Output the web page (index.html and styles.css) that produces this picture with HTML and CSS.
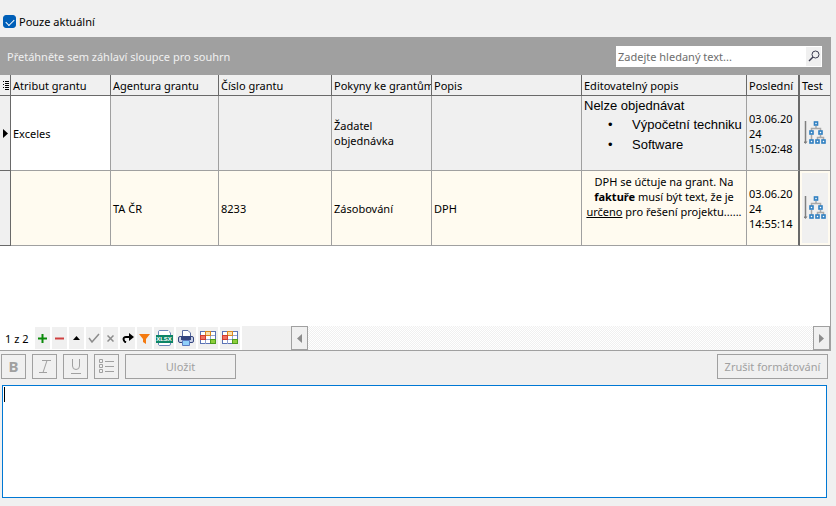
FILE: index.html
```
<!DOCTYPE html>
<html lang="cs">
<head>
  <meta charset="UTF-8">
  <meta name="viewport" content="width=device-width, initial-scale=1.0">
  <title>Granty</title>
  <link rel="stylesheet" href="styles.css">
</head>
<body>
  <svg class="symbols" aria-hidden="true">
    <symbol id="tree" viewBox="0 0 22 24">
      <path d="M1.500 0V22" stroke="#808080" stroke-width="1.500" fill="none"/>
      <path d="M-.5 20.500H3.500L1.500 23Z" fill="#808080"/>
      <path d="M12 5V8M7.500 10V7.500H16.500V10M7.500 14V19M13.500 19V16.500H19.500V19M16.500 14V17" stroke="#a9a9a9" stroke-width="1.500" fill="none"/>
      <g fill="#fff" stroke="#2f7fc1" stroke-width="1.600">
        <rect x="10.500" y="1" width="3" height="3"/>
        <rect x="6" y="10" width="3" height="3"/>
        <rect x="15" y="10" width="3" height="3"/>
        <rect x="6" y="19" width="3" height="3"/>
        <rect x="12" y="19" width="3" height="3"/>
        <rect x="18" y="19" width="3" height="3"/>
      </g>
    </symbol>
    <symbol id="sheet" viewBox="0 0 18 16">
      <rect x="1.500" y="1.500" width="15" height="12" fill="#fff" stroke="#5b73b5"/>
      <path d="M1 5.500H16M1 9.500H16M6.500 2V14M11.500 2V14" stroke="#93a3cf" fill="none"/>
      <rect x="6.500" y="1.500" width="5" height="4" fill="#fbdfae" stroke="#d98a1e"/>
      <rect x="1.500" y="5.500" width="5" height="4" fill="#f07060" stroke="#d03c30"/>
      <rect x="11.500" y="9.500" width="5" height="4" fill="#8ed03c" stroke="#4f9d1c"/>
    </symbol>
  </svg>

  <div class="filter">
    <input type="checkbox" id="current" checked>
    <label for="current">Pouze aktuální</label>
  </div>

  <div class="grid">
    <div class="group-bar">
      <span>Přetáhněte sem záhlaví sloupce pro souhrn</span>
      <div class="search">
        <input type="text" placeholder="Zadejte hledaný text..." aria-label="Hledat">
        <button aria-label="Hledat">
          <svg width="12" height="12" viewBox="0 0 12 12"><circle cx="7.500" cy="4.500" r="3.500" fill="none" stroke="#3c3c50"/><path d="M5 7L1 11" stroke="#3c3c50" stroke-width="1.500"/></svg>
        </button>
      </div>
    </div>

    <div class="rows">
      <table>
        <colgroup>
          <col class="c-mark"><col class="c-attr"><col class="c-agency"><col class="c-number">
          <col class="c-notes"><col class="c-desc"><col><col class="c-last"><col class="c-test">
        </colgroup>
        <thead>
          <tr>
            <th class="mark"><svg width="7" height="9" viewBox="0 0 7 9"><path d="M0 .5H1M0 3.500H1M0 6.500H1M2 .5H6M2 2.500H6M2 4.500H6M2 6.500H6M2 8.500H6" stroke="#000" fill="none"/></svg></th>
            <th>Atribut grantu</th>
            <th>Agentura grantu</th>
            <th>Číslo grantu</th>
            <th>Pokyny ke grantům</th>
            <th>Popis</th>
            <th>Editovatelný popis</th>
            <th class="fixed">Poslední</th>
            <th>Test</th>
          </tr>
        </thead>
        <tbody>
          <tr class="current">
            <td class="mark"><svg width="5" height="9" viewBox="0 0 5 9"><path d="M0 0L5 4.500L0 9Z"/></svg></td>
            <td class="focused">Exceles</td>
            <td></td>
            <td></td>
            <td>Žadatel objednávka</td>
            <td></td>
            <td class="rich">
              Nelze objednávat
              <ul>
                <li>Výpočetní techniku</li>
                <li>Software</li>
              </ul>
            </td>
            <td class="fixed date">03.06.2024<br>15:02:48</td>
            <td class="test"><button aria-label="Struktura"><svg width="22" height="24"><use href="#tree"/></svg></button></td>
          </tr>
          <tr>
            <td class="mark"></td>
            <td></td>
            <td>TA ČR</td>
            <td>8233</td>
            <td>Zásobování</td>
            <td>DPH</td>
            <td class="centered">DPH se účtuje na grant. Na <b>faktuře</b> musí být text, že je <u>určeno</u> pro řešení projektu......</td>
            <td class="fixed date">03.06.2024<br>14:55:14</td>
            <td class="test"><button aria-label="Struktura"><svg width="22" height="24"><use href="#tree"/></svg></button></td>
          </tr>
        </tbody>
      </table>
    </div>

    <div class="navigator">
      <span class="position">1 z 2</span>
      <button aria-label="Přidat"><svg width="9" height="9" viewBox="0 0 9 9"><path d="M4.500 0V9M0 4.500H9" stroke="#0a8a0a" stroke-width="2"/></svg></button>
      <button aria-label="Smazat"><svg width="9" height="9" viewBox="0 0 9 9"><path d="M0 4.500H9" stroke="#d04040" stroke-width="2"/></svg></button>
      <button aria-label="Upravit"><svg width="7" height="4" viewBox="0 0 7 4"><path d="M0 4L3.500 0L7 4Z"/></svg></button>
      <button aria-label="Potvrdit"><svg width="12" height="10" viewBox="0 0 12 10"><path d="M1 5L4 9L11 1" stroke="#8c8c8c" stroke-width="1.500" fill="none"/></svg></button>
      <button aria-label="Zrušit"><svg width="7" height="7" viewBox="0 0 7 7"><path d="M.5 .5L6.500 6.500M6.500 .5L.5 6.500" stroke="#8c8c8c" stroke-width="1.500"/></svg></button>
      <button aria-label="Obnovit"><svg width="12" height="10" viewBox="0 0 12 10"><path d="M4 9.500C1 8 .5 4 4 4H8" stroke="#000" stroke-width="2" fill="none"/><path d="M7 0L12 4L7 8Z"/></svg></button>
      <button aria-label="Filtr"><svg width="11" height="11" viewBox="0 0 11 11"><path d="M0 1H11L7 6V11L4 9V6Z" fill="#f47a10"/></svg></button>
      <button class="wide" aria-label="Export XLSX"><svg width="17" height="16" viewBox="0 0 17 16"><path d="M2.500 5V2Q2.500 .5 4 .5H12L14.500 3V5M2.500 13V14Q2.500 15.500 4 15.500H13Q14.500 15.500 14.500 14V13" fill="#fff" stroke="#6a86b8"/><path d="M3 1H13V15H3Z" fill="#fff"/><rect x="0" y="5" width="17" height="8" fill="#0c8566"/><text class="xlsx" x="8" y="11">XLSX</text></svg></button>
      <button class="wide" aria-label="Tisk"><svg width="16" height="16" viewBox="0 0 16 16"><path d="M4.500 6V.5H10L12.500 3V6" fill="#fff" stroke="#5a6ca0"/><rect x=".5" y="6.500" width="15" height="6" rx="1.500" fill="#c8d0e6" stroke="#34457e"/><path d="M3 7H13V10H3Z" fill="#34457e"/><path d="M4.500 10.500H11.500V15.500H4.500Z" fill="#8fd0fa" stroke="#5a7ac0"/></svg></button>
      <button class="wide" aria-label="Uložit vzhled"><svg width="18" height="16"><use href="#sheet"/></svg></button>
      <button class="wide" aria-label="Načíst vzhled"><svg width="18" height="16"><use href="#sheet"/></svg></button>
      <div class="scrollbar">
        <span class="filler"></span>
        <button aria-label="Posunout vlevo"><svg width="5" height="9" viewBox="0 0 5 9"><path d="M5 0L0 4.500L5 9Z" fill="#8c8c8c"/></svg></button>
        <span class="track"></span>
        <button aria-label="Posunout vpravo"><svg width="5" height="9" viewBox="0 0 5 9"><path d="M0 0L5 4.500L0 9Z" fill="#8c8c8c"/></svg></button>
      </div>
    </div>
  </div>

  <div class="toolbar">
    <button class="tool" disabled aria-label="Tučné"><b>B</b></button>
    <button class="tool" disabled aria-label="Kurzíva"><svg width="14" height="15" viewBox="0 0 14 15"><path d="M4 1.500H13M1 13.500H9M9 1.500L5 13.500" stroke="#a0a0a0" fill="none"/></svg></button>
    <button class="tool" disabled aria-label="Podtržené"><svg width="12" height="15" viewBox="0 0 12 15"><path d="M2.500 0V7Q2.500 10.500 6 10.500T9.500 7V0M1 14.500H11" stroke="#a0a0a0" fill="none"/></svg></button>
    <button class="tool" disabled aria-label="Odrážky"><svg width="15" height="15" viewBox="0 0 15 15"><path d="M.5 .5H3.500V3.500H.5ZM.5 5.500H3.500V8.500H.5ZM.5 10.500H3.500V13.500H.5ZM6 2.500H15M6 7.500H15M6 12.500H15" stroke="#a0a0a0" fill="none"/></svg></button>
    <button class="save" disabled>Uložit</button>
    <button class="clear" disabled>Zrušit formátování</button>
  </div>

  <div class="editor">
    <textarea aria-label="Editovatelný popis"></textarea>
    <span class="caret"></span>
  </div>
</body>
</html>
```
FILE: styles.css
```
* {
  box-sizing: border-box;
}

body {
  margin: 0;
  padding: 14px 5px 8px 0;
  min-height: 100vh;
  display: flex;
  flex-direction: column;
  background: #f0f0f0;
  color: #000;
  font-family: "Noto Sans", "Segoe UI", sans-serif;
  font-size: 11px;
  line-height: 15px;
}

button,
input,
textarea {
  margin: 0;
  padding: 0;
  border: 0;
  font: inherit;
}

button {
  display: flex;
  align-items: center;
  justify-content: center;
  background: #f0f0f0;
}

svg {
  display: block;
}

.symbols {
  position: absolute;
  width: 0;
  height: 0;
}

.filter {
  display: flex;
  align-items: center;
  gap: 3px;
  height: 15px;
  margin: 0 3px 8px;
}

.filter input {
  appearance: none;
  display: flex;
  justify-content: center;
  width: 13px;
  height: 13px;
  border: 1px solid #005fb8;
  border-radius: 3px;
  background: #fff;
}

.filter input:checked {
  background: #005fb8;
}

.filter input:checked::before {
  content: "";
  width: 7px;
  height: 4px;
  margin-top: 3px;
  border: solid #fff;
  border-width: 0 0 1px 1px;
  transform: rotate(-45deg);
}

.grid {
  border-right: 1px solid #a0a0a0;
  border-bottom: 1px solid #a0a0a0;
  background: #fff;
}

.group-bar {
  display: flex;
  align-items: center;
  justify-content: space-between;
  height: 38px;
  padding: 0 8px 0 7px;
  background: #a0a0a0;
  color: #f0f0f0;
}

.search {
  display: flex;
  width: 206px;
  height: 21px;
  padding: 1px;
  background: #fff;
}

.search input {
  flex: 1;
  min-width: 0;
  padding-left: 1px;
  background: #fff;
  outline: 0;
}

.search input::placeholder {
  color: #6d6d6d;
}

.search button {
  width: 15px;
}

.rows {
  height: 251px;
  overflow: hidden;
}

table {
  width: 100%;
  table-layout: fixed;
  border-spacing: 0;
}

.c-mark { width: 11px; }
.c-attr { width: 100px; }
.c-agency { width: 108px; }
.c-number { width: 113px; }
.c-notes { width: 100px; }
.c-desc { width: 150px; }
.c-last { width: 53px; }
.c-test { width: 30px; }

th {
  height: 21px;
  padding: 0 2px;
  border-right: 1px solid #696969;
  border-bottom: 1px solid #696969;
  background: #f0f0f0;
  font-weight: normal;
  text-align: left;
  white-space: nowrap;
  overflow: hidden;
}

td {
  height: 75px;
  padding: 0 2px;
  border-right: 1px solid #a0a0a0;
  border-bottom: 1px solid #a0a0a0;
  background: #fffbf0;
}

.current td {
  background: #f0f0f0;
}

.current .focused {
  background: #fff;
}

.mark,
td.mark {
  padding: 0 0 0 3px;
  border-color: #696969;
  background: #f0f0f0;
}

.fixed {
  border-right: 2px solid #696969;
}

th:last-child,
td:last-child {
  border-right: 0;
}

.date {
  word-break: break-all;
}

.rich {
  padding-top: 1px;
  font-family: "Liberation Sans", Arial, sans-serif;
  font-size: 13px;
  line-height: 18px;
  vertical-align: top;
  white-space: nowrap;
}

.rich ul {
  margin: 0;
  padding-left: 24px;
  list-style: none;
  line-height: 20px;
}

.rich li {
  display: flex;
}

.rich li::before {
  content: "•";
  width: 24px;
}

.centered {
  padding-top: 3px;
  text-align: center;
  vertical-align: top;
}

td.test {
  padding: 2px;
}

.test button {
  width: 100%;
  height: 70px;
}

.navigator {
  display: flex;
  align-items: center;
  gap: 2px;
  height: 24px;
}

.navigator button {
  width: 15px;
  height: 22px;
}

.navigator .wide {
  width: 20px;
}

.position {
  width: 33px;
  padding-left: 5px;
}

.xlsx {
  font: bold 6px "Liberation Sans", Arial, sans-serif;
  fill: #fff;
  text-anchor: middle;
}

.scrollbar {
  display: flex;
  flex: 1;
  height: 24px;
}

.filler {
  width: 49px;
  background: #f0f0f0;
}

.track {
  flex: 1;
  background: repeating-conic-gradient(#f0f0f0 0 25%, #fff 0 50%) 0 0 / 2px 2px;
}

.navigator .scrollbar button {
  width: 17px;
  height: 24px;
  border: 1px solid #a0a0a0;
}

.toolbar {
  display: flex;
  gap: 6px;
  margin: 3px 3px 6px 1px;
}

.toolbar button {
  height: 25px;
  border: 1px solid #a0a0a0;
  color: #a0a0a0;
}

.toolbar .tool {
  width: 25px;
}

.tool b {
  font-size: 15px;
}

.toolbar .save {
  width: 111px;
}

.toolbar .clear {
  width: 111px;
  margin-left: auto;
}

.editor {
  position: relative;
  display: flex;
  flex: 1;
  margin: 0 4px 0 2px;
}

.editor textarea {
  flex: 1;
  padding: 2px;
  border: 1px solid #0078d4;
  background: #fff;
  outline: 0;
  resize: none;
}

.caret {
  position: absolute;
  top: 2px;
  left: 2px;
  width: 1px;
  height: 15px;
  background: #000;
}
```
